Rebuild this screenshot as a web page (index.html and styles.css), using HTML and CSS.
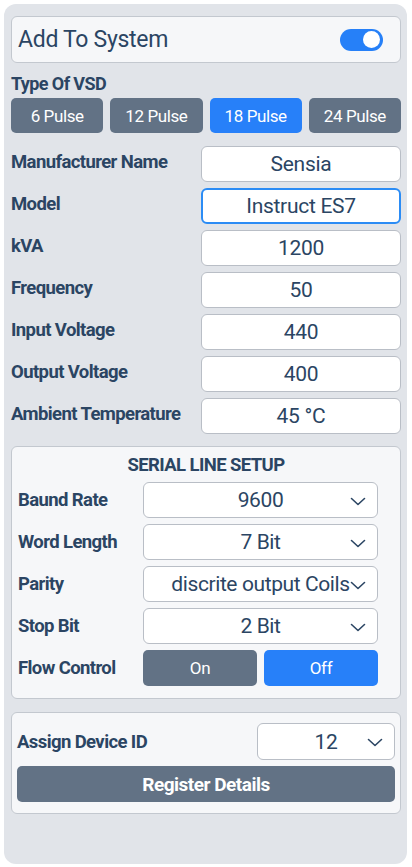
FILE: index.html
```html
<!DOCTYPE html>
<html>
<head>
<meta charset="utf-8">
<link rel="stylesheet" href="styles.css">
</head>
<body>
<div class="panel">
  <div class="card toggle-card">
    <span class="toggle-title">Add To System</span>
    <span class="toggle"><span class="knob"></span></span>
  </div>

  <div class="section-label">Type Of VSD</div>
  <div class="pulse-row">
    <button class="btn">6 Pulse</button>
    <button class="btn">12 Pulse</button>
    <button class="btn active">18 Pulse</button>
    <button class="btn">24 Pulse</button>
  </div>

  <div class="fields">
    <div class="label">Manufacturer Name</div><div class="input">Sensia</div>
    <div class="label">Model</div><div class="input focus">Instruct ES7</div>
    <div class="label">kVA</div><div class="input">1200</div>
    <div class="label">Frequency</div><div class="input">50</div>
    <div class="label">Input Voltage</div><div class="input">440</div>
    <div class="label">Output Voltage</div><div class="input">400</div>
    <div class="label">Ambient Temperature</div><div class="input">45 °C</div>
  </div>

  <div class="card serial">
    <div class="serial-title">SERIAL LINE SETUP</div>
    <div class="serial-grid">
      <div class="label">Baund Rate</div>
      <div class="select"><span>9600</span><svg class="chev" viewBox="0 0 16 9"><polyline points="1.5,1.5 8,7.5 14.5,1.5"/></svg></div>
      <div class="label">Word Length</div>
      <div class="select"><span>7 Bit</span><svg class="chev" viewBox="0 0 16 9"><polyline points="1.5,1.5 8,7.5 14.5,1.5"/></svg></div>
      <div class="label">Parity</div>
      <div class="select"><span>discrite output Coils</span><svg class="chev" viewBox="0 0 16 9"><polyline points="1.5,1.5 8,7.5 14.5,1.5"/></svg></div>
      <div class="label">Stop Bit</div>
      <div class="select"><span>2 Bit</span><svg class="chev" viewBox="0 0 16 9"><polyline points="1.5,1.5 8,7.5 14.5,1.5"/></svg></div>
      <div class="label">Flow Control</div>
      <div class="flow">
        <button class="btn">On</button>
        <button class="btn active">Off</button>
      </div>
    </div>
  </div>

  <div class="card device">
    <div class="device-row">
      <div class="label">Assign Device ID</div>
      <div class="select small"><span>12</span><svg class="chev" viewBox="0 0 16 9"><polyline points="1.5,1.5 8,7.5 14.5,1.5"/></svg></div>
    </div>
    <button class="btn register">Register Details</button>
  </div>
</div>
</body>
</html>
```

FILE: styles.css
```css
* { box-sizing: border-box; }
body {
  margin: 0;
  background: #ffffff;
  font-family: Roboto, "Liberation Sans", sans-serif;
  color: #2b4563;
}
.panel {
  margin: 4px 5px 0 4px;
  height: 860px;
  background: #e1e4e9;
  border-radius: 12px;
  padding: 12px 6px 0 7px;
}
.card {
  background: #f6f7f9;
  border: 1px solid #c3c8cf;
  border-radius: 6px;
}
.toggle-card {
  height: 47px;
  display: flex;
  align-items: center;
  justify-content: space-between;
  padding: 0 17px 0 6px;
}
.toggle-title {
  font-size: 23px;
  font-weight: 400;
  letter-spacing: -0.3px;
}
.toggle {
  width: 43px;
  height: 22px;
  border-radius: 11px;
  background: #2680f8;
  display: flex;
  align-items: center;
  justify-content: flex-end;
  padding: 0 3px;
}
.knob {
  width: 17px;
  height: 17px;
  border-radius: 50%;
  background: #ffffff;
}
.section-label {
  margin-top: 10px;
  line-height: 22px;
  font-size: 18px;
  font-weight: 700;
  letter-spacing: -0.6px;
}
.pulse-row {
  margin-top: 3px;
  display: grid;
  grid-template-columns: repeat(4, 1fr);
  gap: 7px;
}
.btn {
  height: 35px;
  border: none;
  border-radius: 5px;
  background: #627285;
  color: #ffffff;
  font-family: inherit;
  font-size: 17px;
  letter-spacing: -0.4px;
  padding: 0;
}
.btn.active { background: #2780f9; }
.fields {
  margin-top: 13px;
  display: grid;
  grid-template-columns: 1fr 200px;
  row-gap: 6px;
}
.label {
  font-size: 18.5px;
  font-weight: 700;
  letter-spacing: -0.6px;
  line-height: 22px;
}
.fields .label { padding-top: 5px; }
.input {
  height: 36px;
  background: #ffffff;
  border: 1px solid #b9bec6;
  border-radius: 6px;
  display: flex;
  align-items: center;
  justify-content: center;
  font-size: 21px;
  letter-spacing: -0.3px;
}
.input.focus {
  border: 2px solid #2b8cf5;
}
.serial {
  margin-top: 12px;
  padding: 5px 0 12px 6px;
}
.serial-title {
  text-align: center;
  font-size: 18.5px;
  font-weight: 700;
  letter-spacing: -0.6px;
  line-height: 26px;
  margin-bottom: 4px;
  padding-right: 6px;
}
.serial-grid {
  display: grid;
  grid-template-columns: 125px 235px;
  row-gap: 6px;
  align-items: center;
}
.select {
  position: relative;
  height: 36px;
  background: #ffffff;
  border: 1px solid #b9bec6;
  border-radius: 6px;
  display: flex;
  align-items: center;
  justify-content: center;
  font-size: 21px;
  letter-spacing: -0.4px;
  white-space: nowrap;
}
.chev {
  position: absolute;
  right: 11px;
  top: 14px;
  width: 16px;
  height: 9px;
}
.chev polyline {
  fill: none;
  stroke: #2b4563;
  stroke-width: 1.6;
  stroke-linecap: round;
  stroke-linejoin: round;
}
.flow {
  display: grid;
  grid-template-columns: 1fr 1fr;
  gap: 7px;
}
.flow .btn { height: 36px; }
.device {
  margin-top: 13px;
  padding: 10px 5px 11px 5px;
}
.device-row {
  display: flex;
  align-items: center;
  justify-content: space-between;
}
.select.small {
  width: 138px;
  height: 37px;
}
.register {
  margin-top: 6px;
  width: 100%;
  height: 36px;
  font-weight: 700;
  font-size: 19px;
  letter-spacing: -0.5px;
}
```
